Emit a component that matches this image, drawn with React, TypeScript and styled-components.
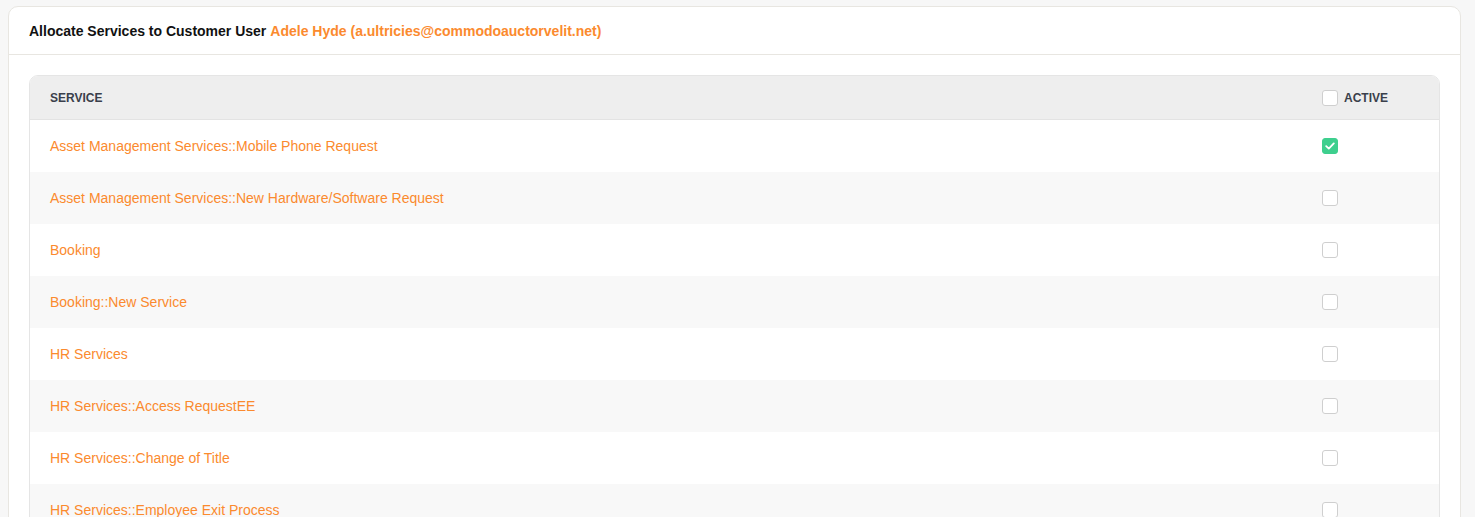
import React from 'react'
import styled, { createGlobalStyle } from 'styled-components'

const GlobalStyle = createGlobalStyle`
  body {
    margin: 0;
    background: #f7f7f7;
    font-family: "Liberation Sans", Arial, sans-serif;
  }
`

const services = [
  { name: 'Asset Management Services::Mobile Phone Request', active: true },
  { name: 'Asset Management Services::New Hardware/Software Request', active: false },
  { name: 'Booking', active: false },
  { name: 'Booking::New Service', active: false },
  { name: 'HR Services', active: false },
  { name: 'HR Services::Access RequestEE', active: false },
  { name: 'HR Services::Change of Title', active: false },
  { name: 'HR Services::Employee Exit Process', active: false },
]

const Page = styled.div`
  padding: 6px 14px 0 8px;
  height: 517px;
  box-sizing: border-box;
  overflow: hidden;
`

const Card = styled.section`
  background: #fff;
  border: 1px solid #e8e6e1;
  border-radius: 10px;
`

const CardHeader = styled.header`
  height: 47px;
  padding: 0 20px;
  display: flex;
  align-items: center;
  border-bottom: 1px solid #e8e6e1;
  font-size: 14px;
  font-weight: bold;
  color: #111;
`

const Highlight = styled.span`
  color: #fb8a2e;
  margin-left: 4px;
`

const CardBody = styled.div`
  padding: 20px;
`

const Table = styled.div`
  border: 1px solid #e5e5e5;
  border-radius: 9px 9px 0 0;
  overflow: hidden;
`

const Row = styled.div<{ $head?: boolean; $odd?: boolean }>`
  display: grid;
  grid-template-columns: 1fr 117px;
  align-items: center;
  height: ${p => (p.$head ? '43px' : '52px')};
  padding-left: 20px;
  background: ${p => (p.$head ? '#eeeeee' : p.$odd ? '#f8f8f8' : '#fff')};
  border-bottom: ${p => (p.$head ? '1px solid #e3e3e3' : 'none')};
`

const HeadCell = styled.div`
  display: flex;
  align-items: center;
  gap: 6px;
  font-size: 12px;
  font-weight: bold;
  color: #3a3f4b;
  text-transform: uppercase;
`

const ServiceName = styled.span`
  font-size: 14px;
  color: #fb8a2e;
`

const CheckCell = styled.div`
  display: flex;
  align-items: center;
`

const Box = styled.span<{ $checked?: boolean }>`
  width: 16px;
  height: 16px;
  box-sizing: border-box;
  border-radius: 3px;
  display: inline-flex;
  align-items: center;
  justify-content: center;
  flex-shrink: 0;
  background: ${p => (p.$checked ? '#3ecf8e' : '#fff')};
  border: 1px solid ${p => (p.$checked ? '#3ecf8e' : '#cfcfcf')};
`

const Check = ({ checked }: { checked?: boolean }) => (
  <Box $checked={checked}>
    {checked && (
      <svg width="10" height="8" viewBox="0 0 10 8">
        <path d="M1.2 4.2 L3.8 6.6 L8.8 1.4" fill="none" stroke="#fff" strokeWidth="1.8" strokeLinecap="round" strokeLinejoin="round" />
      </svg>
    )}
  </Box>
)

const App = () => {
  return (
    <Page>
      <GlobalStyle />
      <Card>
        <CardHeader>
          Allocate Services to Customer User
          <Highlight>Adele Hyde (a.ultricies@commodoauctorvelit.net)</Highlight>
        </CardHeader>
        <CardBody>
          <Table>
            <Row $head>
              <HeadCell>Service</HeadCell>
              <HeadCell>
                <Check />
                Active
              </HeadCell>
            </Row>
            {services.map((service, i) => (
              <Row key={service.name} $odd={i % 2 === 1}>
                <ServiceName>{service.name}</ServiceName>
                <CheckCell>
                  <Check checked={service.active} />
                </CheckCell>
              </Row>
            ))}
          </Table>
        </CardBody>
      </Card>
    </Page>
  )
}

export default App
